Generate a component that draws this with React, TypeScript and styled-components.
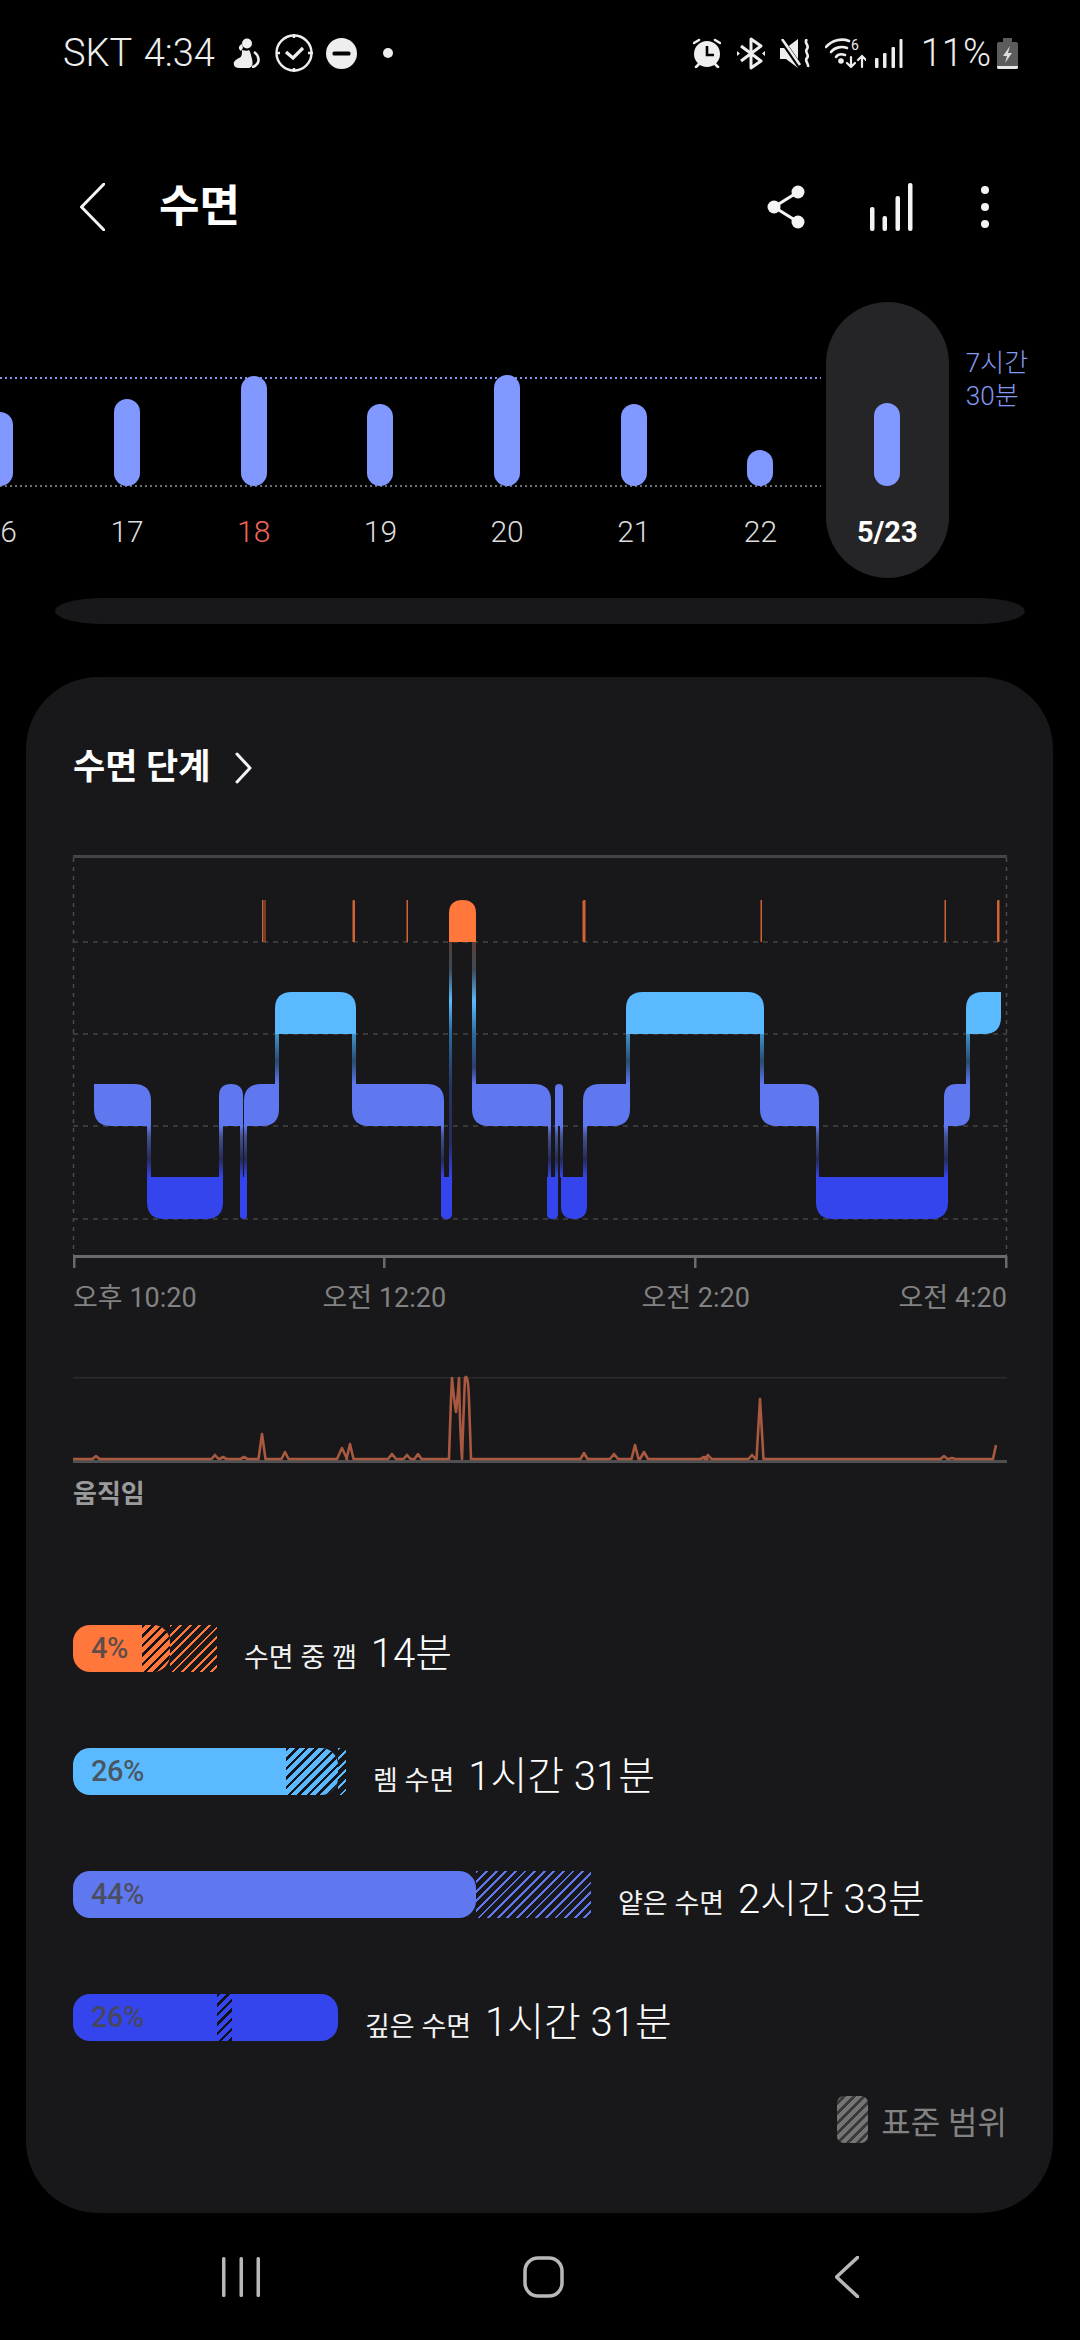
import { FC } from "react";
import styled, { createGlobalStyle } from "styled-components";

const GlobalStyle = createGlobalStyle`
   html, body {
      margin: 0;
      padding: 0;
      background: #000;
   }
   * {
      box-sizing: border-box;
   }
`;

const FONT = `Roboto, "Noto Sans CJK KR", sans-serif`;

const ORANGE = "#ff773a";
const REM = "#5bbaff";
const LIGHT = "#5f78f0";
const DEEP = "#3545ee";

const Page = styled.div`
   width: 1080px;
   height: 2340px;
   overflow: hidden;
   background: #000;
   font-family: ${FONT};
   color: #fff;
`;

/* status bar */
const StatusBar = styled.div`
   height: 106px;
   padding: 0 62px 0 63px;
   display: flex;
   align-items: center;
   justify-content: space-between;
   color: #eee;
`;

const StatusGroup = styled.div`
   display: flex;
   align-items: center;
`;

const StatusText = styled.span<{ $gap?: number }>`
   margin-left: ${(p) => p.$gap ?? 0}px;
   font-size: 38px;
   font-weight: 300;
   line-height: 44px;
   word-spacing: 3px;
   white-space: nowrap;
`;

const Glyph = styled.svg<{ $gap?: number }>`
   display: block;
   flex: none;
   margin-left: ${(p) => p.$gap ?? 0}px;
`;

/* header */
const Header = styled.div`
   margin-top: 21px;
   height: 160px;
   padding: 0 91px 0 80px;
   display: flex;
   align-items: center;
`;

const Title = styled.h1`
   margin: 0 0 0 54px;
   font-size: 44px;
   font-weight: 700;
   line-height: 60px;
   flex: 1;
`;

const HeaderActions = styled.div`
   display: flex;
   align-items: center;
   gap: 65px;
`;

/* daily strip */
const Strip = styled.div`
   position: relative;
   margin-top: 15px;
   height: 276px;
   overflow: hidden;
   display: flex;
`;

const DottedLine = styled.div<{ $top: number; $color: string }>`
   position: absolute;
   left: 0;
   top: ${(p) => p.$top}px;
   width: 821px;
   height: 2px;
   background: repeating-linear-gradient(90deg, ${(p) => p.$color} 0 2px, transparent 2px 5px);
`;

const Days = styled.div`
   position: relative;
   display: flex;
   margin-left: -63px;
   flex: none;
`;

const Day = styled.div`
   width: 126.7px;
   height: 276px;
   display: flex;
   flex-direction: column;
   align-items: center;
`;

const SelectedDay = styled(Day)`
   width: 123px;
   margin-left: 2px;
   border-radius: 62px;
   background: #252527;
`;

const Plot = styled.div`
   height: 184px;
   display: flex;
   align-items: flex-end;
`;

const DayBar = styled.div<{ $height: number }>`
   width: 26px;
   height: ${(p) => p.$height}px;
   border-radius: 13px;
   background: #8098ff;
`;

const DayLabel = styled.div<{ $selected?: boolean; $holiday?: boolean }>`
   margin-top: 26px;
   font-size: ${(p) => (p.$selected ? 29 : 30)}px;
   font-weight: ${(p) => (p.$selected ? 700 : 300)};
   line-height: 40px;
   color: ${(p) => (p.$holiday ? "#f0645c" : p.$selected ? "#fff" : "#ddd")};
`;

const GoalNote = styled.div`
   margin: 45px 0 0 17px;
   font-size: 26px;
   font-weight: 300;
   line-height: 33px;
   color: #8598f0;
   white-space: pre-line;
`;

const Sliver = styled.div`
   margin: 20px 0 0 55px;
   width: 970px;
   height: 26px;
   border-radius: 48px / 13px;
   background: #18181a;
`;

/* card */
const Card = styled.div`
   margin: 53px 0 0 26px;
   width: 1027px;
   padding: 67px 46px 70px 47px;
   border-radius: 72px;
   background: #18181a;
`;

const CardTitle = styled.div`
   display: flex;
   align-items: center;
   gap: 24px;
   font-size: 35px;
   font-weight: 700;
   line-height: 48px;
`;

const StageChart = styled.svg`
   display: block;
   margin-top: 60px;
   overflow: visible;
`;

const TimeAxis = styled.div`
   margin-top: 6px;
   display: flex;
   justify-content: space-between;
   font-size: 27px;
   line-height: 40px;
   font-weight: 400;
   color: #828282;
`;

const TimeMark = styled.div<{ $align: string }>`
   width: 0;
   display: flex;
   justify-content: ${(p) => p.$align};
   white-space: nowrap;
`;

const MotionChart = styled.svg`
   display: block;
   margin-top: 56px;
   overflow: visible;
`;

const MotionLabel = styled.div`
   margin-top: 10px;
   font-size: 26px;
   font-weight: 700;
   line-height: 36px;
   color: #9a9a9a;
`;

const Stages = styled.div`
   margin-top: 113px;
   display: flex;
   flex-direction: column;
   gap: 76px;
`;

const StageRow = styled.div`
   display: flex;
   align-items: center;
   height: 47px;
`;

const Track = styled.div<{ $width: number }>`
   position: relative;
   flex: none;
   width: ${(p) => p.$width}px;
   height: 47px;
`;

const Fill = styled.div<{ $width: number; $color: string }>`
   position: relative;
   width: ${(p) => p.$width}px;
   height: 47px;
   padding: 0 0 2px 18px;
   display: flex;
   align-items: center;
   overflow: hidden;
   border-radius: 17px;
   background: ${(p) => p.$color};
`;

const Percent = styled.span`
   position: relative;
   z-index: 1;
   font-size: 29px;
   font-weight: 500;
   letter-spacing: -0.5px;
   color: rgba(72, 72, 76, 0.88);
`;

const Hatch = styled.div<{ $left: number; $width: number; $color: string; $line: number }>`
   position: absolute;
   top: 0;
   bottom: 0;
   left: ${(p) => p.$left}px;
   width: ${(p) => p.$width}px;
   background: repeating-linear-gradient(
      135deg,
      ${(p) => p.$color} 0 ${(p) => p.$line}px,
      transparent ${(p) => p.$line}px 6.8px
   );
`;

const StageText = styled.div`
   margin: 3px 0 0 27px;
   display: flex;
   align-items: baseline;
   gap: 14px;
   white-space: nowrap;
`;

const StageName = styled.span`
   font-size: 27px;
   font-weight: 400;
   color: #f2f2f2;
`;

const StageValue = styled.span`
   font-size: 40px;
   font-weight: 300;
   color: #fff;
`;

const Legend = styled.div`
   margin-top: 55px;
   display: flex;
   justify-content: flex-end;
   align-items: center;
   gap: 13px;
   font-size: 32px;
   font-weight: 400;
   color: #828282;
`;

const LegendSwatch = styled.div`
   width: 31px;
   height: 47px;
   border-radius: 7px;
   background: repeating-linear-gradient(135deg, #747474 0 4px, #3a3a3a 4px 7px);
`;

/* navigation bar */
const NavBar = styled.div`
   height: 127px;
   padding-left: 222px;
   display: flex;
   align-items: center;
`;

/* icons */
const PersonIcon = () => (
   <Glyph $gap={18} width="27" height="30" viewBox="0 0 27 30" fill="#eee">
      <circle cx="14" cy="5.5" r="5" />
      <path d="M9 6C5 8 5 11 8 13l2-3z" />
      <path d="M9 12c3 1 6 1 7 0 2 3 2 6 3 9 1 4 1 8-3 9H6c-4 0-6-3-5-6 1-2 3-3 5-4 3-1 3-4 3-8z" />
      <path d="M21 14c5 3 6 10 2 13-1 1-2 2-4 2" fill="none" stroke="#eee" strokeWidth="2.6" />
   </Glyph>
);

const RoutineIcon = () => (
   <Glyph $gap={15} width="39" height="38" viewBox="0 0 39 38" fill="none" stroke="#eee">
      <circle cx="19" cy="19" r="17.5" strokeWidth="2.4" />
      <path d="M11 18l7 6 10-10" strokeWidth="3.2" />
      <path d="M19 0v4M19 34v4M1 19h4M33 19h5" strokeWidth="2.4" />
   </Glyph>
);

const DndIcon = () => (
   <Glyph $gap={12} width="31" height="31" viewBox="0 0 31 31">
      <circle cx="15.5" cy="15.5" r="15.5" fill="#eee" />
      <rect x="6.5" y="13.5" width="18" height="4" rx="1.5" fill="#000" />
   </Glyph>
);

const DotIcon = () => (
   <Glyph $gap={26} width="10" height="10" viewBox="0 0 10 10">
      <circle cx="5" cy="5" r="5" fill="#eee" />
   </Glyph>
);

const AlarmIcon = () => (
   <Glyph width="28" height="30" viewBox="0 0 28 30">
      <circle cx="14" cy="16" r="13" fill="#eee" />
      <path d="M14 8v9h7" fill="none" stroke="#000" strokeWidth="2.6" />
      <path d="M1 5l5-3M27 5l-5-3M3 29l3-3M25 29l-3-3" stroke="#eee" strokeWidth="2.6" strokeLinecap="round" />
   </Glyph>
);

const BluetoothIcon = () => (
   <Glyph $gap={16} width="28" height="33" viewBox="0 0 28 33">
      <path d="M4 9l20 15-10 7V2l10 7L4 24" fill="none" stroke="#eee" strokeWidth="3" strokeLinejoin="round" />
      <path d="M0 14l3 2.500-3 2.500zM28 14l-3 2.500 3 2.500z" fill="#eee" />
   </Glyph>
);

const MuteIcon = () => (
   <Glyph $gap={15} width="30" height="29" viewBox="0 0 30 29">
      <path d="M0 9h6L18 0v29L6 20H0z" fill="#eee" />
      <path d="M1 0l20 29" stroke="#000" strokeWidth="5" />
      <path d="M2 0l18 26" stroke="#eee" strokeWidth="2.6" />
      <path d="M27 0c-4 4 3 6 0 10-3 3 3 6 0 9-3 3 2 5 1 9" fill="none" stroke="#eee" strokeWidth="2.6" />
   </Glyph>
);

const WifiIcon = () => (
   <Glyph $gap={15} width="41" height="31" viewBox="0 0 41 31" fill="none" stroke="#eee" strokeWidth="2.600" strokeLinecap="round">
      <path d="M1 9C7 2 17 0 24 3" />
      <path d="M6 14c4-5 11-6 16-4" />
      <path d="M11 19c2-3 6-3 9-2" />
      <circle cx="16" cy="23" r="1.500" fill="#eee" />
      <text x="26" y="12" fontSize="14" fontFamily="Roboto, sans-serif" fill="#eee" stroke="none">
         6
      </text>
      <path d="M26 19v10M22 25l4 4 4-4M37 29V18M33 22l4-4 4 4" strokeWidth="2.200" />
   </Glyph>
);

const SignalIcon = () => (
   <Glyph $gap={9} width="28" height="29" viewBox="0 0 28 29" fill="#eee">
      <rect x="0" y="19" width="3.500" height="10" rx="1" />
      <rect x="8" y="14" width="3.500" height="15" rx="1" />
      <rect x="16.500" y="8" width="3.500" height="21" rx="1" />
      <rect x="24.500" y="0" width="3" height="29" rx="1" />
   </Glyph>
);

const BatteryIcon = () => (
   <Glyph $gap={6} width="21" height="31" viewBox="0 0 21 31">
      <path d="M6 0h9v4h4a2 2 0 0 1 2 2v25H0V6a2 2 0 0 1 2-2h4z" fill="#5c5c5c" />
      <path d="M0 28h21v1a2 2 0 0 1-2 2H2a2 2 0 0 1-2-2z" fill="#e8e8e8" />
      <path d="M13 8l-7 10h4l-2 7 7-10h-4z" fill="#ddd" />
   </Glyph>
);

const BackIcon: FC<{ w: number; h: number; stroke: string; width: number; gap?: number }> = ({ w, h, stroke, width, gap }) => (
   <Glyph $gap={gap} width={w} height={h} viewBox={`0 0 ${w} ${h}`} fill="none">
      <path d={`M${w - 1} 1L1.500 ${h / 2}L${w - 1} ${h - 1}`} stroke={stroke} strokeWidth={width} strokeLinecap="round" strokeLinejoin="round" />
   </Glyph>
);

const ChevronRight = () => (
   <Glyph width="17" height="32" viewBox="0 0 17 32" fill="none">
      <path d="M2 2l13 14L2 30" stroke="#f4f4f4" strokeWidth="3" strokeLinecap="round" strokeLinejoin="round" />
   </Glyph>
);

const ShareIcon = () => (
   <Glyph width="38" height="44" viewBox="0 0 38 44" fill="#f4f4f4">
      <circle cx="7" cy="22" r="6.500" />
      <circle cx="31" cy="7" r="6.500" />
      <circle cx="31" cy="37" r="6.500" />
      <path d="M7 22L31 7M7 22l24 15" stroke="#f4f4f4" strokeWidth="3.200" />
   </Glyph>
);

const TrendIcon = () => (
   <Glyph width="43" height="48" viewBox="0 0 43 48" fill="#f4f4f4">
      <rect x="0" y="24" width="4.500" height="24" rx="2" />
      <rect x="12.500" y="33" width="4.500" height="15" rx="2" />
      <rect x="25.500" y="13" width="4.500" height="35" rx="2" />
      <rect x="38" y="0" width="4.500" height="48" rx="2" />
   </Glyph>
);

const MoreIcon = () => (
   <Glyph $gap={3} width="8" height="42" viewBox="0 0 8 42" fill="#f4f4f4">
      <circle cx="4" cy="4" r="4" />
      <circle cx="4" cy="21" r="4" />
      <circle cx="4" cy="38" r="4" />
   </Glyph>
);

const RecentsIcon = () => (
   <Glyph width="38" height="40" viewBox="0 0 38 40" fill="#b8b8b8">
      <rect x="0" y="0" width="3.500" height="40" rx="1.500" />
      <rect x="17.500" y="0" width="3.500" height="40" rx="1.500" />
      <rect x="34.500" y="0" width="3.500" height="40" rx="1.500" />
   </Glyph>
);

const HomeIcon = () => (
   <Glyph $gap={263} width="41" height="42" viewBox="0 0 41 42" fill="none">
      <rect x="2" y="2" width="37" height="38" rx="13" stroke="#b8b8b8" strokeWidth="3.500" />
   </Glyph>
);

/* stage chart data, in page pixels */
type Corners = [number, number, number, number];

const roundedRect = (x0: number, x1: number, y0: number, y1: number, c: Corners) => {
   const max = (x1 - x0) / 2;
   const [tl, tr, br, bl] = c.map((r) => Math.min(r, max));
   return (
      `M${x0 + tl} ${y0}H${x1 - tr}Q${x1} ${y0} ${x1} ${y0 + tr}` +
      `V${y1 - br}Q${x1} ${y1} ${x1 - br} ${y1}` +
      `H${x0 + bl}Q${x0} ${y1} ${x0} ${y1 - bl}` +
      `V${y0 + tl}Q${x0} ${y0} ${x0 + tl} ${y0}Z`
   );
};

const ROWS = {
   wake: [900, 942],
   rem: [992, 1034],
   light: [1084, 1126],
   deep: [1177, 1219],
};

const R = 17;

const blocks: { row: keyof typeof ROWS; x0: number; x1: number; c: Corners; dim?: boolean }[] = [
   { row: "wake", x0: 262, x1: 263.5, c: [0, 0, 0, 0], dim: true },
   { row: "wake", x0: 264.5, x1: 265.5, c: [0, 0, 0, 0], dim: true },
   { row: "wake", x0: 352.5, x1: 355, c: [1, 1, 0, 0], dim: true },
   { row: "wake", x0: 406.5, x1: 408, c: [0, 0, 0, 0], dim: true },
   { row: "wake", x0: 449, x1: 476, c: [14, 14, 0, 0] },
   { row: "wake", x0: 582.5, x1: 585.5, c: [2, 0, 0, 2], dim: true },
   { row: "wake", x0: 760.5, x1: 762, c: [0, 0, 0, 0], dim: true },
   { row: "wake", x0: 944.5, x1: 946, c: [0, 0, 0, 0], dim: true },
   { row: "wake", x0: 997, x1: 999.5, c: [2, 0, 0, 2], dim: true },
   { row: "rem", x0: 275, x1: 356, c: [R, R, 0, 0] },
   { row: "rem", x0: 626, x1: 764, c: [R, R, 0, 0] },
   { row: "rem", x0: 966, x1: 1001, c: [R, 0, R, 0] },
   { row: "light", x0: 94, x1: 151, c: [0, R, 0, R] },
   { row: "light", x0: 219, x1: 243, c: [R, R, 0, 0] },
   { row: "light", x0: 244, x1: 279, c: [R, 0, R, 0] },
   { row: "light", x0: 352, x1: 444, c: [0, R, 0, R] },
   { row: "light", x0: 472, x1: 551, c: [0, R, 0, R] },
   { row: "light", x0: 555, x1: 563, c: [4, 4, 0, 0] },
   { row: "light", x0: 583, x1: 630, c: [R, 0, R, 0] },
   { row: "light", x0: 760, x1: 819, c: [0, R, 0, R] },
   { row: "light", x0: 944, x1: 970, c: [R, 0, R, 0] },
   { row: "deep", x0: 147, x1: 223, c: [0, 0, R, R] },
   { row: "deep", x0: 240, x1: 247, c: [0, 0, 4, 4] },
   { row: "deep", x0: 441, x1: 452, c: [0, 0, 5, 5] },
   { row: "deep", x0: 547, x1: 558, c: [0, 0, 5, 5] },
   { row: "deep", x0: 561, x1: 587, c: [0, 0, 13, 13] },
   { row: "deep", x0: 816, x1: 948, c: [0, 0, R, R] },
];

const COLORS = { wake: ORANGE, rem: REM, light: LIGHT, deep: DEEP };

const links: { x: number; w: number; y0: number; y1: number; fill: string }[] = [
   { x: 147, w: 4, y0: 1126, y1: 1177, fill: "lightDeep" },
   { x: 219, w: 4, y0: 1126, y1: 1177, fill: "lightDeep" },
   { x: 240, w: 3, y0: 1126, y1: 1177, fill: "lightDeep" },
   { x: 244, w: 3, y0: 1126, y1: 1177, fill: "lightDeep" },
   { x: 275, w: 4, y0: 1034, y1: 1084, fill: "remLight" },
   { x: 352, w: 4, y0: 1034, y1: 1084, fill: "remLight" },
   { x: 441, w: 3, y0: 1126, y1: 1177, fill: "lightDeep" },
   { x: 449, w: 3, y0: 942, y1: 1177, fill: "wakeDeep" },
   { x: 472, w: 4, y0: 942, y1: 1084, fill: "wakeLight" },
   { x: 548, w: 3, y0: 1126, y1: 1177, fill: "lightDeep" },
   { x: 555, w: 3, y0: 1126, y1: 1177, fill: "lightDeep" },
   { x: 560, w: 3, y0: 1126, y1: 1177, fill: "lightDeep" },
   { x: 583, w: 4, y0: 1126, y1: 1177, fill: "lightDeep" },
   { x: 626, w: 4, y0: 1034, y1: 1084, fill: "remLight" },
   { x: 760, w: 4, y0: 1034, y1: 1084, fill: "remLight" },
   { x: 816, w: 3, y0: 1126, y1: 1177, fill: "lightDeep" },
   { x: 944, w: 4, y0: 1126, y1: 1177, fill: "lightDeep" },
   { x: 966, w: 4, y0: 1034, y1: 1084, fill: "remLight" },
];

const GRID_Y = [942, 1034, 1126, 1219];
const TICKS = [74, 384, 695, 1006];

const SleepStages = () => (
   <StageChart width="934" height="420" viewBox="73 852 934 420">
      <defs>
         <linearGradient id="lightDeep" x1="0" y1="0" x2="0" y2="1">
            <stop offset="0" stopColor="#5f78f0" />
            <stop offset="0.2" stopColor="#43528f" />
            <stop offset="0.65" stopColor="#252b58" />
            <stop offset="1" stopColor={DEEP} />
         </linearGradient>
         <linearGradient id="remLight" x1="0" y1="0" x2="0" y2="1">
            <stop offset="0" stopColor="#3f93c8" />
            <stop offset="0.55" stopColor="#2a4a70" />
            <stop offset="1" stopColor={LIGHT} />
         </linearGradient>
         <linearGradient id="wakeDeep" x1="0" y1="0" x2="0" y2="1">
            <stop offset="0" stopColor="#523c34" />
            <stop offset="0.12" stopColor="#3d4a58" />
            <stop offset="0.25" stopColor={REM} />
            <stop offset="0.38" stopColor="#2c6a9c" />
            <stop offset="0.62" stopColor="#27325e" />
            <stop offset="0.85" stopColor="#252b60" />
            <stop offset="1" stopColor={DEEP} />
         </linearGradient>
         <linearGradient id="wakeLight" x1="0" y1="0" x2="0" y2="1">
            <stop offset="0" stopColor="#5a4036" />
            <stop offset="0.2" stopColor="#3d4a58" />
            <stop offset="0.42" stopColor={REM} />
            <stop offset="0.65" stopColor="#2a6a9a" />
            <stop offset="0.88" stopColor="#2c3c70" />
            <stop offset="1" stopColor={LIGHT} />
         </linearGradient>
      </defs>

      <rect x="73" y="855" width="934" height="3" fill="#444446" />
      <path d="M73.500 858V1255M1006.500 858V1255" stroke="#4a4a4c" strokeWidth="1.500" strokeDasharray="4 5" />
      {GRID_Y.map((y) => (
         <path key={y} d={`M73 ${y}H1007`} stroke="#444446" strokeWidth="1.500" strokeDasharray="5 5" />
      ))}

      {links.map((l) => (
         <rect key={`${l.x}-${l.y0}`} x={l.x} y={l.y0} width={l.w} height={l.y1 - l.y0} fill={`url(#${l.fill})`} />
      ))}
      {blocks.map((b) => (
         <path
            key={`${b.row}-${b.x0}`}
            d={roundedRect(b.x0, b.x1, ROWS[b.row][0], ROWS[b.row][1], b.c)}
            fill={COLORS[b.row]}
            opacity={b.dim ? 0.8 : 1}
         />
      ))}

      <rect x="73" y="1255" width="934" height="3" fill="#6a6a6c" />
      {TICKS.map((x) => (
         <rect key={x} x={x - 1} y="1256" width="2.500" height="12" fill="#6a6a6c" />
      ))}
   </StageChart>
);

/* motion chart */
const BASE = 1459;

const spikes: [number, number, number?][] = [
   [96, 1456],
   [215, 1455],
   [223, 1457],
   [244, 1457],
   [262, 1434],
   [285, 1452],
   [342, 1448, 5],
   [350, 1444],
   [392, 1454, 4],
   [407, 1455],
   [418, 1454],
   [584, 1453],
   [614, 1454, 4],
   [635, 1445],
   [644, 1452, 4],
   [704, 1457],
   [708, 1455],
   [752, 1455],
   [760, 1399],
   [944, 1456],
   [952, 1458],
];

const motionPath = () => {
   const before = spikes.filter((s) => s[0] < 452);
   const after = spikes.filter((s) => s[0] > 452);
   const pts = (list: [number, number, number?][]) =>
      list.map(([x, y, w = 3.5]) => `L${x - w} ${BASE}L${x} ${y}L${x + w} ${BASE}`).join("");
   return (
      `M73 ${BASE}` +
      pts(before) +
      `L449 ${BASE}Q451 1395 452 1378Q454 1400 456 1412Q458 1395 459 1378Q460 1430 462 ${BASE}` +
      `Q464 1400 465 1378Q468 1372 469 1400L471 ${BASE}` +
      pts(after) +
      `L993 ${BASE}L996 1445`
   );
};

const SleepMotion = () => (
   <MotionChart width="934" height="92" viewBox="73 1374 934 92">
      <rect x="73" y="1377" width="934" height="1.500" fill="#2c2c2e" />
      <rect x="73" y="1460" width="934" height="3" fill="#505052" />
      <path d={motionPath()} fill="none" stroke="#a8593f" strokeWidth="2.6" strokeLinejoin="round" />
   </MotionChart>
);

const days = [
   { label: "16", height: 74 },
   { label: "17", height: 87 },
   { label: "18", height: 110, holiday: true },
   { label: "19", height: 82 },
   { label: "20", height: 111 },
   { label: "21", height: 82 },
   { label: "22", height: 36 },
];

const stages = [
   { percent: "4%", name: "수면 중 깸", value: "14분", color: ORANGE, fill: 97, start: 69, end: 144 },
   { percent: "26%", name: "렘 수면", value: "1시간 31분", color: REM, fill: 265, start: 213, end: 273 },
   { percent: "44%", name: "얕은 수면", value: "2시간 33분", color: LIGHT, fill: 403, start: 403, end: 518 },
   { percent: "26%", name: "깊은 수면", value: "1시간 31분", color: DEEP, fill: 265, start: 144, end: 159 },
];

const App = () => {
   return (
      <Page>
         <GlobalStyle />
         <StatusBar>
            <StatusGroup>
               <StatusText>SKT 4:34</StatusText>
               <PersonIcon />
               <RoutineIcon />
               <DndIcon />
               <DotIcon />
            </StatusGroup>
            <StatusGroup>
               <AlarmIcon />
               <BluetoothIcon />
               <MuteIcon />
               <WifiIcon />
               <SignalIcon />
               <StatusText $gap={18}>11%</StatusText>
               <BatteryIcon />
            </StatusGroup>
         </StatusBar>

         <Header>
            <BackIcon w={25} h={48} stroke="#f4f4f4" width={3} />
            <Title>수면</Title>
            <HeaderActions>
               <ShareIcon />
               <TrendIcon />
               <MoreIcon />
            </HeaderActions>
         </Header>

         <Strip>
            <DottedLine $top={75} $color="#8094f0" />
            <DottedLine $top={183} $color="#6f6f78" />
            <Days>
               {days.map((d) => (
                  <Day key={d.label}>
                     <Plot>
                        <DayBar $height={d.height} />
                     </Plot>
                     <DayLabel $holiday={d.holiday}>{d.label}</DayLabel>
                  </Day>
               ))}
               <SelectedDay>
                  <Plot>
                     <DayBar $height={83} />
                  </Plot>
                  <DayLabel $selected>5/23</DayLabel>
               </SelectedDay>
            </Days>
            <GoalNote>{"7시간\n30분"}</GoalNote>
         </Strip>

         <Sliver />

         <Card>
            <CardTitle>
               수면 단계
               <ChevronRight />
            </CardTitle>

            <SleepStages />

            <TimeAxis>
               <TimeMark $align="flex-start">오후 10:20</TimeMark>
               <TimeMark $align="center">오전 12:20</TimeMark>
               <TimeMark $align="center">오전 2:20</TimeMark>
               <TimeMark $align="flex-end">오전 4:20</TimeMark>
            </TimeAxis>

            <SleepMotion />
            <MotionLabel>움직임</MotionLabel>

            <Stages>
               {stages.map((s) => {
                  const innerEnd = Math.min(s.end, s.fill);
                  const outerStart = Math.max(s.start, s.fill);
                  return (
                     <StageRow key={s.name}>
                        <Track $width={Math.max(s.end, s.fill)}>
                           <Fill $width={s.fill} $color={s.color}>
                              {innerEnd > s.start && (
                                 <Hatch $left={s.start} $width={innerEnd - s.start} $color="#12121a" $line={2.4} />
                              )}
                              <Percent>{s.percent}</Percent>
                           </Fill>
                           {s.end > outerStart && (
                              <Hatch $left={outerStart} $width={s.end - outerStart} $color={s.color} $line={2} />
                           )}
                        </Track>
                        <StageText>
                           <StageName>{s.name}</StageName>
                           <StageValue>{s.value}</StageValue>
                        </StageText>
                     </StageRow>
                  );
               })}
            </Stages>

            <Legend>
               <LegendSwatch />
               표준 범위
            </Legend>
         </Card>

         <NavBar>
            <RecentsIcon />
            <HomeIcon />
            <BackIcon w={24} h={42} stroke="#b8b8b8" width={3.5} gap={271} />
         </NavBar>
      </Page>
   );
};

export default App;
